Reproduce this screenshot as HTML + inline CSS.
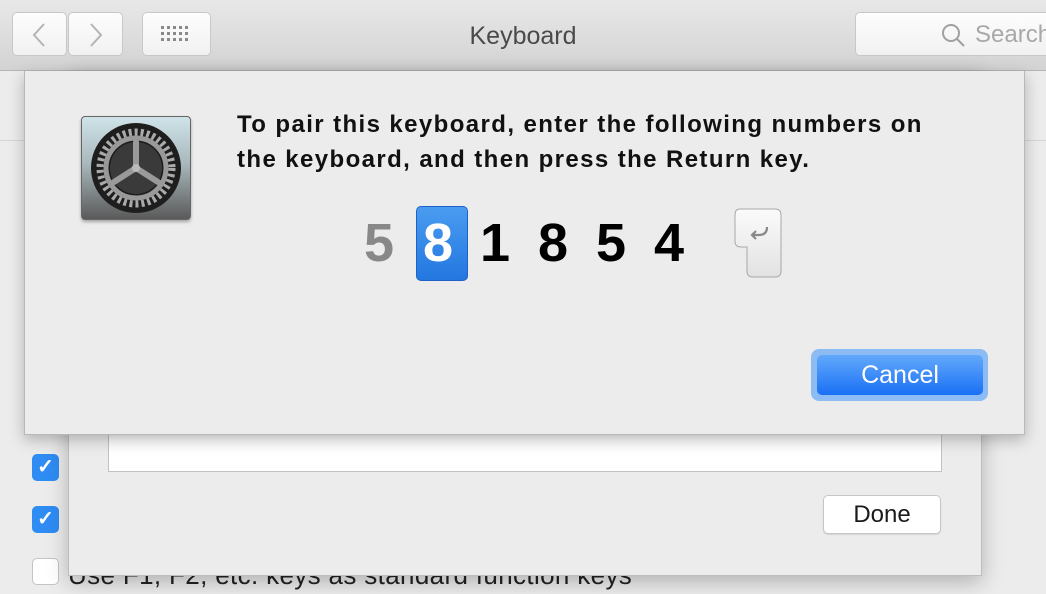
<!DOCTYPE html>
<html><head><meta charset="utf-8"><style>
*{margin:0;padding:0;box-sizing:border-box}
body{width:1046px;height:594px;overflow:hidden;background:#ececec;font-family:"Liberation Sans",sans-serif;position:relative}
.abs{position:absolute}
.tb{left:0;top:0;width:1046px;height:71px;background:linear-gradient(#e8e8e8,#d3d3d3);border-bottom:1px solid #b5b5b5}
.btn{background:linear-gradient(#fdfdfd,#f1f1f1);border:1px solid #c8c8c8;border-radius:5px}
.cb{left:32px;width:27px;height:27px;border-radius:5px;background:#2f8cf3;color:#fff;font-size:20px;font-weight:bold;text-align:center;line-height:27px}
</style></head><body>
<div class="abs tb"></div>
<div class="abs btn" style="left:12px;top:12px;width:55px;height:44px"></div>
<div class="abs btn" style="left:68px;top:12px;width:55px;height:44px"></div>
<svg class="abs" style="left:0;top:0" width="1046" height="71">
<path d="M44 24 L34 35 L44 46" stroke="#b4b4b4" stroke-width="2" fill="none"/>
<path d="M91 24 L101 35 L91 46" stroke="#b4b4b4" stroke-width="2" fill="none"/>
</svg>
<div class="abs btn" style="left:142px;top:12px;width:69px;height:44px"></div>
<svg class="abs" style="left:161px;top:26px" width="30" height="17">
<g fill="#8a8a8a"><rect x="0" y="0" width="3" height="3"/><rect x="6" y="0" width="3" height="3"/><rect x="12" y="0" width="3" height="3"/><rect x="18" y="0" width="3" height="3"/><rect x="24" y="0" width="3" height="3"/>
<rect x="0" y="6" width="3" height="3"/><rect x="6" y="6" width="3" height="3"/><rect x="12" y="6" width="3" height="3"/><rect x="18" y="6" width="3" height="3"/><rect x="24" y="6" width="3" height="3"/>
<rect x="0" y="12" width="3" height="3"/><rect x="6" y="12" width="3" height="3"/><rect x="12" y="12" width="3" height="3"/><rect x="18" y="12" width="3" height="3"/><rect x="24" y="12" width="3" height="3"/></g></svg>
<div class="abs" style="left:0;width:1046px;top:22px;text-align:center;font-size:25px;color:#4a4a4a">Keyboard</div>
<div class="abs btn" style="left:855px;top:12px;width:200px;height:44px"></div>
<svg class="abs" style="left:940px;top:22px" width="28" height="28"><circle cx="11" cy="11" r="8" stroke="#a0a0a0" stroke-width="2" fill="none"/><path d="M17 17 L24 24" stroke="#a0a0a0" stroke-width="2"/></svg>
<div class="abs" style="left:975px;top:21px;font-size:24px;color:#a8a8a8">Search</div>
<div class="abs" style="left:0;top:140px;width:1046px;height:1px;background:#d6d6d6"></div>

<div class="abs cb" style="top:454px">✓</div>
<div class="abs cb" style="top:506px">✓</div>
<div class="abs" style="left:32px;top:558px;width:27px;height:27px;border-radius:5px;background:#fff;border:1px solid #c4c4c4"></div>
<div class="abs" style="left:68px;top:560px;font-size:26px;letter-spacing:0.35px;color:#222">Use F1, F2, etc. keys as standard function keys</div>

<div class="abs" style="left:68px;top:71px;width:914px;height:505px;background:#ececec;border:1px solid #bdbdbd;box-shadow:0 6px 20px rgba(0,0,0,.25)"></div>
<div class="abs" style="left:108px;top:420px;width:834px;height:52px;background:linear-gradient(#e2e2e2,#fff 40%);border:1px solid #c2c2c2;border-top:none"></div>
<div class="abs" style="left:823px;top:495px;width:118px;height:39px;background:#fff;border:1px solid #c6c6c6;border-radius:5px;box-shadow:0 1px 1px rgba(0,0,0,.1);text-align:center;font-size:24px;line-height:38px;color:#1a1a1a">Done</div>

<div class="abs" style="left:24px;top:71px;width:1001px;height:364px;background:#ececec;border:1px solid #b8b8b8;border-top:none;box-shadow:0 5px 14px rgba(0,0,0,.25)"></div>
<div class="abs" style="left:81px;top:116px;width:110px;height:104px;border-radius:4px;background:linear-gradient(#cfe3e8,#a9b9bd 45%,#5a5a5a);border:1px solid #666;box-shadow:0 2px 3px rgba(0,0,0,.3)"></div>
<svg class="abs" style="left:86px;top:120px" width="100" height="96" viewBox="0 0 100 96">
<circle cx="50" cy="48" r="45" fill="#1e1e1e"/>
<circle cx="50" cy="48" r="36" fill="none" stroke="#aaa" stroke-width="7" stroke-dasharray="3 3"/>
<circle cx="50" cy="48" r="30" fill="none" stroke="#999" stroke-width="5"/>
<circle cx="50" cy="48" r="26" fill="#3a3a3a"/>
<g stroke="#9a9a9a" stroke-width="6" stroke-linecap="round"><path d="M50 48 L50 22"/><path d="M50 48 L28 62"/><path d="M50 48 L72 62"/></g>
<circle cx="50" cy="48" r="4" fill="#bbb"/>
</svg>
<div class="abs" style="left:237px;top:107px;font-size:24px;font-weight:bold;color:#111;line-height:35px;letter-spacing:1.4px;white-space:nowrap">To pair this keyboard, enter the following numbers on<br>the keyboard, and then press the Return key.</div>

<div class="abs" style="left:416px;top:206px;width:52px;height:75px;border-radius:5px;background:linear-gradient(#4a9cf0,#2377e0);border:1px solid #1e62c8"></div>
<div class="abs" style="top:212px;left:0;font-size:54px;font-weight:bold;line-height:62px;color:#000">
<span class="abs" style="left:364px;color:#888">5</span>
<span class="abs" style="left:423px;color:#fff">8</span>
<span class="abs" style="left:480px">1</span>
<span class="abs" style="left:538px">8</span>
<span class="abs" style="left:596px">5</span>
<span class="abs" style="left:654px">4</span>
</div>
<svg class="abs" style="left:733px;top:207px" width="52" height="76">
<defs><linearGradient id="k" x1="0" y1="0" x2="0" y2="1"><stop offset="0" stop-color="#fbfbfb"/><stop offset="1" stop-color="#e2e2e2"/></linearGradient></defs>
<path d="M7 2 H42 Q48 2 48 8 V64 Q48 70 42 70 H20 Q14 70 14 64 V40 H8 Q2 40 2 34 V8 Q2 2 7 2 Z" fill="url(#k)" stroke="#a8a8a8" stroke-width="1"/>
<path d="M34 20 Q34 28 26 28 H19 M23 24 L19 28 L23 32" stroke="#888" stroke-width="2.2" fill="none"/>
</svg>
<div class="abs" style="left:811px;top:349px;width:177px;height:52px;border-radius:8px;background:#8cbcf3"></div>
<div class="abs" style="left:817px;top:355px;width:166px;height:40px;border-radius:5px;background:linear-gradient(#62a9fb,#1a70f5);text-align:center;color:#fff;font-size:25px;line-height:40px">Cancel</div>
</body></html>
